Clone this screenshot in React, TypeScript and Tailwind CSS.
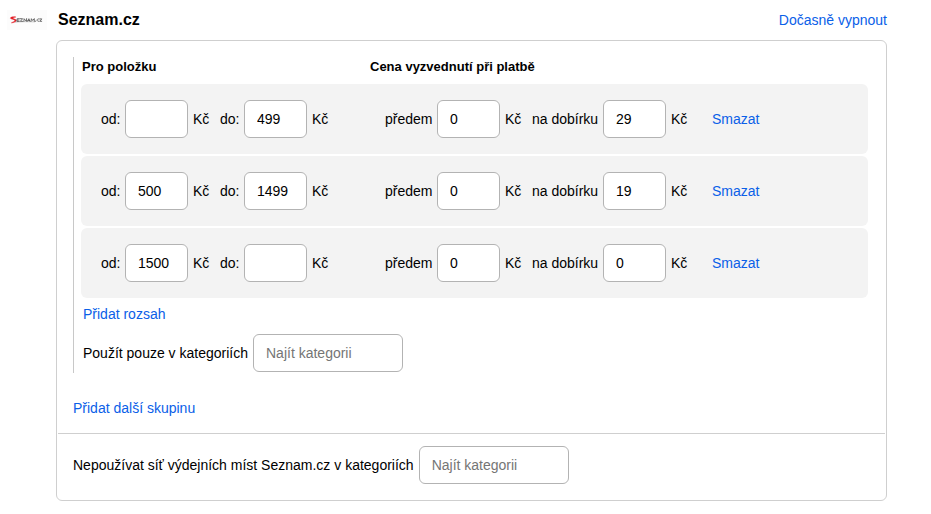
import { useState } from "react";

type Range = { id: number; from: string; to: string; prepaid: string; cod: string };

const initialRanges: Range[] = [
  { id: 1, from: "", to: "499", prepaid: "0", cod: "29" },
  { id: 2, from: "500", to: "1499", prepaid: "0", cod: "19" },
  { id: 3, from: "1500", to: "", prepaid: "0", cod: "0" },
];

const linkClass = "cursor-pointer text-[#0a60e8] hover:underline";
const fieldClass = "h-[38px] rounded-md border border-[#b3b3b3] bg-white px-3 text-black";

function SeznamLogo() {
  return (
    <svg viewBox="0 0 40 20" className="h-5 w-10 shrink-0" role="img" aria-label="Seznam.cz">
      <rect width="40" height="20" fill="#fcfcfc" />
      <path
        d="M8.800 7C6.500 6.600 3.400 7 3.400 8.200c0 1 4.400 1 4.400 2.200 0 1-2 1.600-3.400 2.400 2.600 0 4.600-.9 4.800-2.200.2-1.500-3.400-1.600-3.400-2.500 0-.6 1.500-.9 3-1.100z"
        fill="#e01b22"
        stroke="#e01b22"
        strokeWidth=".5"
      />
      <g fill="none" stroke="#4a4a4a" strokeWidth=".8" strokeLinecap="round">
        <path d="M12.400 8.700h-2.200l-.3 2.800h2.300M10 10.100h2M13.300 8.700h2.300l-2.300 2.700h2.500M16.900 11.500l.2-2.800 2.300 2.700.2-2.800M20.300 11.500l1.600-2.800 1.100 2.800M21 10.600h1.600M24 11.500l.4-2.800 1.300 1.800 1.600-1.900v2.900" />
        <path d="M28.400 11.200h.3M32 8.900c-2.400-.5-2.900 2.600-.3 2.400M32.900 8.900h1.900l-2.100 2.400h2" />
      </g>
      <path d="M8 12.200c6-.6 13-.6 20-.3" fill="none" stroke="#888" strokeWidth=".4" />
    </svg>
  );
}

function PriceField({ label, value, labelWidth }: { label: string; value: string; labelWidth: string }) {
  return (
    <label className="flex items-center">
      <span className={`whitespace-nowrap ${labelWidth}`}>{label}</span>
      <input type="text" defaultValue={value} className={`w-[63px] ${fieldClass}`} />
      <span className="w-8 pl-[5px]">Kč</span>
    </label>
  );
}

function CategoryField({ label }: { label: string }) {
  return (
    <label className="flex items-center gap-[5px]">
      <span>{label}</span>
      <input type="text" placeholder="Najít kategorii" className={`w-[150px] placeholder:text-[#757575] ${fieldClass}`} />
    </label>
  );
}

export default function App() {
  const [ranges, setRanges] = useState(initialRanges);
  const addRange = () =>
    setRanges([...ranges, { id: Date.now(), from: "", to: "", prepaid: "0", cod: "0" }]);

  return (
    <main className="bg-white pt-2.5 pr-11 pb-3 pl-[7px] font-['Liberation_Sans',Arial,sans-serif] text-sm text-black">
      <header className="flex h-5 items-center">
        <SeznamLogo />
        <h1 className="ml-[11px] text-base leading-5 font-bold">Seznam.cz</h1>
        <button type="button" className={`ml-auto ${linkClass}`}>Dočasně vypnout</button>
      </header>

      <section className="mt-2.5 ml-[49px] rounded-md border border-[#cfcfcf]">
        <div className="px-4 pt-4 pb-[15px]">
          <div className="border-l border-[#c8c8c8] pr-0.5 pl-[7px]">
            <div className="grid h-[27px] grid-cols-[288px_1fr] pl-px text-[13px] leading-5 font-bold">
              <h2>Pro položku</h2>
              <h2>Cena vyzvednutí při platbě</h2>
            </div>
            <ul className="flex flex-col gap-0.5">
              {ranges.map((range) => (
                <li
                  key={range.id}
                  className="grid grid-cols-[284px_327px_auto] items-center justify-start rounded-md bg-[#f3f3f3] py-4 pl-5"
                >
                  <div className="flex">
                    <PriceField label="od:" value={range.from} labelWidth="w-6" />
                    <PriceField label="do:" value={range.to} labelWidth="w-6" />
                  </div>
                  <div className="flex">
                    <PriceField label="předem" value={range.prepaid} labelWidth="w-[52px]" />
                    <PriceField label="na dobírku" value={range.cod} labelWidth="w-[71px]" />
                  </div>
                  <button
                    type="button"
                    className={linkClass}
                    onClick={() => setRanges(ranges.filter((r) => r.id !== range.id))}
                  >
                    Smazat
                  </button>
                </li>
              ))}
            </ul>
            <div className="flex flex-col items-start gap-2.5 pt-1.5 pb-px pl-0.5">
              <button type="button" className={linkClass} onClick={addRange}>Přidat rozsah</button>
              <CategoryField label="Použít pouze v kategoriích" />
            </div>
          </div>
          <button type="button" className={`mt-[25px] block ${linkClass}`}>Přidat další skupinu</button>
        </div>
        <div className="mx-px border-t border-[#cfcfcf] px-[15px] pt-3 pb-4">
          <CategoryField label="Nepoužívat síť výdejních míst Seznam.cz v kategoriích" />
        </div>
      </section>
    </main>
  );
}
